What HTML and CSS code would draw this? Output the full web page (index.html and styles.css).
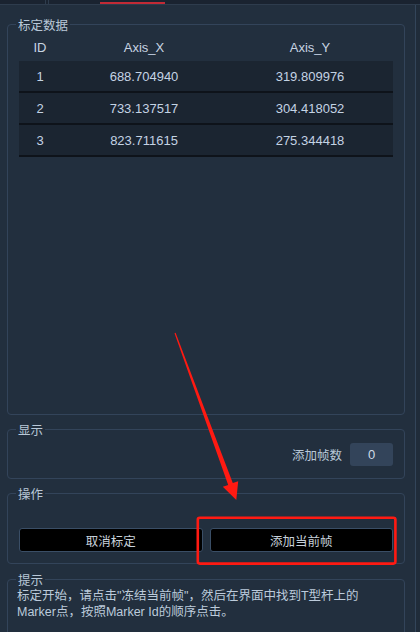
FILE: index.html
```html
<!DOCTYPE html>
<html lang="zh-CN">
<head>
<meta charset="utf-8">
<title>标定</title>
<link rel="stylesheet" href="styles.css">
</head>
<body>
<div class="topbar">
  <div class="tab tab-a"></div>
  <div class="tab tab-b"></div>
  <div class="tab-active"></div>
</div>
<div class="app">
  <div class="main">
    <section class="group g-data">
      <div class="group-title">标定数据</div>
      <div class="table">
        <div class="trow thead"><span>ID</span><span>Axis_X</span><span>Axis_Y</span></div>
        <div class="trow tbody"><span>1</span><span>688.704940</span><span>319.809976</span></div>
        <div class="trow tbody"><span>2</span><span>733.137517</span><span>304.418052</span></div>
        <div class="trow tbody"><span>3</span><span>823.711615</span><span>275.344418</span></div>
      </div>
    </section>
    <section class="group g-show">
      <div class="group-title">显示</div>
      <div class="show-row">
        <span class="label">添加帧数</span>
        <span class="count">0</span>
      </div>
    </section>
    <section class="group g-op">
      <div class="group-title">操作</div>
      <div class="op-row">
        <button class="btn">取消标定</button>
        <button class="btn">添加当前帧</button>
      </div>
    </section>
    <section class="group g-hint">
      <div class="group-title">提示</div>
      <p class="hint">标定开始，请点击"冻结当前帧"，然后在界面中找到T型杆上的<br>Marker点，按照Marker Id的顺序点击。</p>
    </section>
  </div>
  <div class="scroll"></div>
</div>
<svg class="annot" width="420" height="632" viewBox="0 0 420 632">
  <polygon points="174.5,333.2 175.6,332.8 232.8,483.1 238.2,481.2 236.3,500 222.8,486.8 228.2,485" fill="#ff1a12"/>
  <rect x="197.8" y="517.8" width="197.6" height="45.8" rx="2" ry="2" fill="none" stroke="#ff1a12" stroke-width="2.6"/>
</svg>
</body>
</html>
```

FILE: styles.css
```css
* {
  box-sizing: border-box;
  margin: 0;
  padding: 0;
}

html, body {
  width: 420px;
  height: 632px;
  overflow: hidden;
}

body {
  position: relative;
  background: #222f3e;
  font-family: "Liberation Sans", "Noto Sans CJK SC", sans-serif;
  color: #c4d2e2;
}

.topbar {
  display: flex;
  height: 5px;
  background: #1a2330;
  border-bottom: 1px solid #2e3c4d;
}

.tab {
  height: 4px;
  border-right: 1px solid #2e3c4d;
}

.tab-a { width: 46px; }
.tab-b { width: 3px; }

.tab-active {
  margin-left: 51px;
  width: 65px;
  height: 4px;
  border-bottom: 2px solid #c22a35;
}

.app {
  display: flex;
  height: 627px;
  overflow: hidden;
}

.main {
  width: 415px;
  flex: none;
  display: flex;
  flex-direction: column;
  gap: 14px;
  padding: 19px 10px 0 7px;
  overflow: hidden;
}

.scroll {
  flex: 1;
  border-left: 1px solid #33455a;
  background: #202c3a;
}

.group {
  flex: none;
  border: 1px solid #33445a;
  border-radius: 4px;
}

.group-title {
  width: fit-content;
  margin: -6px 0 0 8px;
  padding: 0 2px;
  background: #222f3e;
  font-size: 12.5px;
  line-height: 14px;
  color: #b9c8d8;
}

.g-data { height: 391px; }

.table {
  margin: 0 11px;
}

.trow {
  display: grid;
  grid-template-columns: 42px 1fr 1fr;
  align-items: center;
  text-align: center;
  font-size: 13px;
}

.thead {
  height: 28px;
  padding-top: 1px;
  color: #c8d5e3;
}

.tbody {
  height: 32px;
  background: #1b2531;
  border-bottom: 2px solid #0e131a;
  color: #c4d3e4;
}

.g-show { height: 50px; }

.show-row {
  display: flex;
  justify-content: flex-end;
  align-items: center;
  gap: 8px;
  margin: 5px 11px 0 0;
}

.label {
  font-size: 12.5px;
  color: #b9c8d8;
}

.count {
  display: flex;
  align-items: center;
  justify-content: center;
  width: 43px;
  height: 23px;
  background: #33445a;
  border-radius: 3px;
  font-size: 13px;
  color: #d0dbe7;
}

.g-op { height: 71px; }

.op-row {
  display: flex;
  gap: 7px;
  margin: 26px 11px 11px;
}

.btn {
  flex: 1;
  height: 24px;
  background: #000;
  border: 1px solid #3a4e66;
  border-radius: 3px;
  font-family: inherit;
  font-size: 12.5px;
  color: #c8d2dc;
}

.g-hint {
  height: 70px;
  margin-top: 1px;
}

.hint {
  margin-left: 9px;
  font-size: 12.5px;
  line-height: 16px;
  color: #bccbdb;
}

.annot {
  position: absolute;
  top: 0;
  left: 0;
  pointer-events: none;
}
```
